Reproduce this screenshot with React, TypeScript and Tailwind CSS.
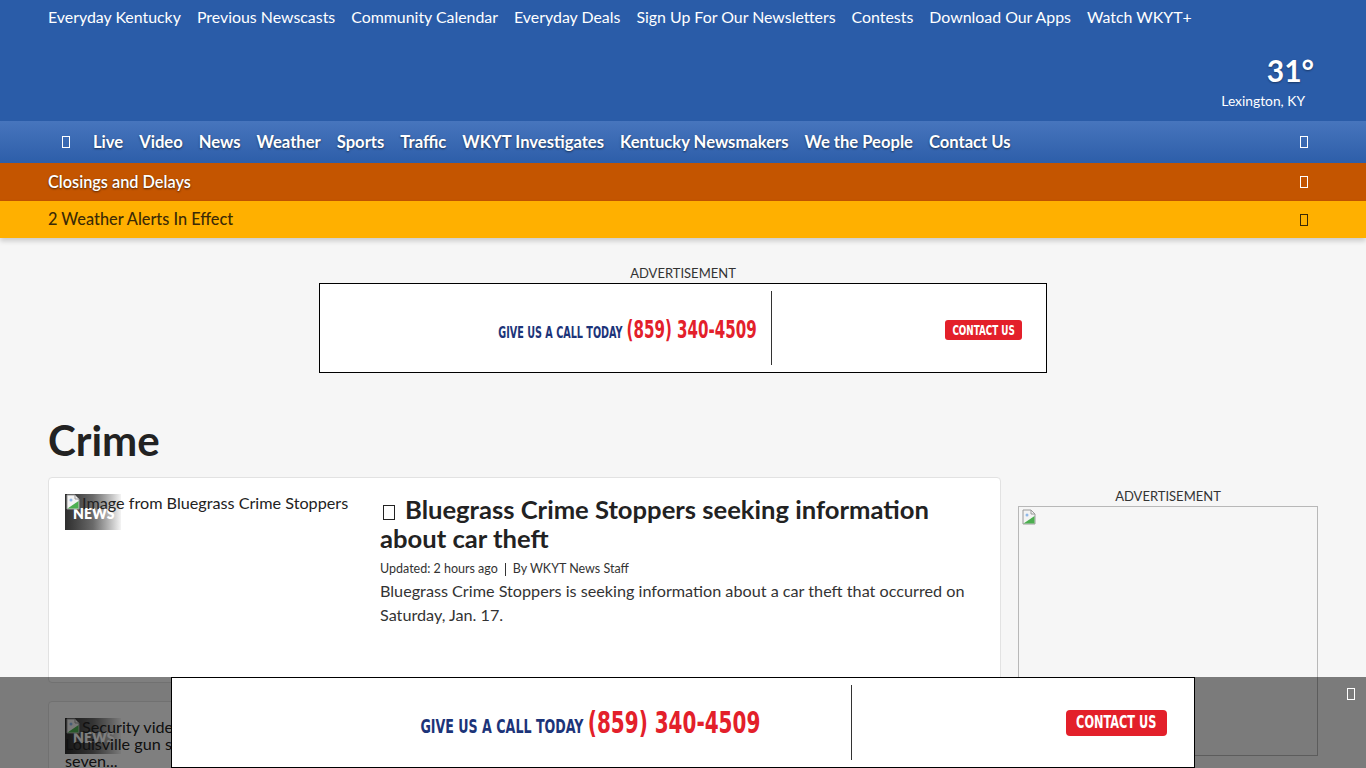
import React from "react";

const topLinks = [
    "Everyday Kentucky",
    "Previous Newscasts",
    "Community Calendar",
    "Everyday Deals",
    "Sign Up For Our Newsletters",
    "Contests",
    "Download Our Apps",
    "Watch WKYT+",
];

const navLinks = [
    "Live",
    "Video",
    "News",
    "Weather",
    "Sports",
    "Traffic",
    "WKYT Investigates",
    "Kentucky Newsmakers",
    "We the People",
    "Contact Us",
];

// missing-glyph box, the site's icon font never loaded
function Tofu({ className = "" }: { className?: string }) {
    return <span className={`inline-block w-[8px] h-[12px] border border-current ${className}`} />;
}

function BrokenImage({ className = "" }: { className?: string }) {
    return (
        <svg width="16" height="16" viewBox="0 0 16 16" className={`shrink-0 ${className}`}>
            <path d="M2 1h8l4 4v10H2z" fill="#f3f3f3" stroke="#9a9a9a" />
            <path d="M10 1v4h4" fill="none" stroke="#9a9a9a" />
            <path d="M2.5 14.5 L13.5 7 V14.5 Z" fill="#4caf50" />
            <circle cx="6" cy="6" r="1.5" fill="#8fb8e8" />
        </svg>
    );
}

function CallAd({ big }: { big?: boolean }) {
    return (
        <div className="flex h-full items-center font-['DejaVu_Sans_Condensed','DejaVu_Sans',sans-serif] font-bold">
            <div
                className={
                    big
                        ? "w-[679px] h-full flex items-center justify-end pr-[91px]"
                        : "w-[451px] h-full flex items-center justify-end pr-[14px] pt-[4px]"
                }
            >
                <span
                    className={
                        big
                            ? "inline-flex items-baseline gap-[6px] origin-right scale-x-[0.74] whitespace-nowrap"
                            : "inline-flex items-baseline gap-[6px] origin-right scale-x-[0.67] whitespace-nowrap"
                    }
                >
                    <span className={big ? "text-[19px] text-[#1c3479]" : "text-[16px] text-[#1c3479]"}>GIVE US A CALL TODAY</span>
                    <span className={big ? "text-[30px] text-[#e3202a]" : "text-[25px] text-[#e3202a]"}>(859) 340-4509</span>
                </span>
            </div>
            <div className={big ? "w-px h-[75px] bg-[#333]" : "w-px h-[74px] bg-[#333]"} />
            <div className={big ? "flex-1 flex justify-end pr-[27px]" : "flex-1 flex justify-end pr-[24px] pt-[4px]"}>
                <span
                    className={
                        big
                            ? "bg-[#e3202a] text-white rounded-[4px] w-[101px] h-[26px] flex items-center justify-center"
                            : "bg-[#e3202a] text-white rounded-[3px] w-[77px] h-[20px] flex items-center justify-center"
                    }
                >
                    <span className={big ? "text-[17px] scale-x-[0.74] whitespace-nowrap" : "text-[14px] scale-x-[0.7] whitespace-nowrap"}>
                        CONTACT US
                    </span>
                </span>
            </div>
        </div>
    );
}

function StoryCard({
    alt,
    title,
    meta,
    desc,
}: {
    alt: React.ReactNode;
    title?: string;
    meta?: string;
    desc?: string;
}) {
    return (
        <div className="bg-white border border-[#e2e2e2] rounded-[4px] p-[16px] flex gap-[15px] min-h-[206px]">
            <div className="relative w-[300px] shrink-0">
                <div className="absolute left-0 top-0 w-[56px] h-[36px] bg-gradient-to-r from-[#2e2e2e] via-[#6a6a6a] to-[#f4f4f4] flex items-end pb-[9px] pl-[8px]">
                    <span className="text-white font-extrabold text-[14px] leading-none">NEWS</span>
                </div>
                <div className="relative text-[16.2px] leading-[17px] text-[#222]">
                    <BrokenImage className="inline-block align-top mr-[1px]" />
                    {alt}
                </div>
            </div>
            {title && (
                <div className="flex-1 pt-[1px]">
                    <h2 className="text-[25.6px] leading-[29px] font-bold text-[#222]">
                        <Tofu className="w-[12px] h-[15px] align-[-1px] mr-[10px] ml-[3px] border-[#444]" />
                        {title}
                    </h2>
                    <div className="mt-[8px] text-[12.5px] leading-[16px] text-[#333] flex items-center">
                        <span>Updated: 2 hours ago</span>
                        <span className="mx-[7px] w-px h-[13px] bg-[#333]" />
                        <span>{meta}</span>
                    </div>
                    <p className="mt-[2px] text-[16.2px] leading-[24px] text-[#333]">{desc}</p>
                </div>
            )}
        </div>
    );
}

export default function App() {
    return (
        <main className="min-h-screen bg-[#f6f6f6] font-['Lato','Noto_Sans',sans-serif] overflow-hidden h-[768px] relative">
            {/* Header */}
            <div className="bg-[#2a5ca8] h-[121px] px-[48px] text-white">
                <div className="flex gap-[16px] h-[34px] items-center text-[15.9px]">
                    {topLinks.map((l) => (
                        <span key={l} className="whitespace-nowrap">{l}</span>
                    ))}
                </div>
                <div className="flex justify-end pr-[4px] pt-[18px]">
                    <div className="flex flex-col items-end">
                        <span className="text-[30px] leading-[36px] font-bold [text-shadow:0_1px_2px_rgba(0,0,0,0.4)]">31°</span>
                        <span className="text-[13.8px] leading-[16px] mt-[5px] mr-[9px]">Lexington, KY</span>
                    </div>
                </div>
            </div>

            {/* Main nav */}
            <div className="h-[42px] bg-gradient-to-b from-[#4775bd] to-[#2d5ea9] flex items-center pl-[62px] pr-[58px] text-white font-bold text-[16.6px] [text-shadow:0_1px_2px_rgba(0,0,0,0.55)]">
                <Tofu className="mr-[23px]" />
                <div className="flex gap-[16px]">
                    {navLinks.map((l) => (
                        <span key={l} className="whitespace-nowrap">{l}</span>
                    ))}
                </div>
                <Tofu className="ml-auto" />
            </div>

            {/* Alert bars */}
            <div className="h-[38px] bg-[#c45500] flex items-center px-[48px] pr-[58px] text-white text-[16.3px] font-semibold [text-shadow:0_1px_2px_rgba(0,0,0,0.6)]">
                <span>Closings and Delays</span>
                <Tofu className="ml-auto h-[11px] w-[7px]" />
            </div>
            <div className="h-[37px] bg-[#ffb000] flex items-center px-[48px] pr-[58px] text-[#3b2a06] text-[16.3px] font-medium shadow-[0_3px_5px_rgba(0,0,0,0.18)] relative">
                <span>2 Weather Alerts In Effect</span>
                <Tofu className="ml-auto h-[11px] w-[7px]" />
            </div>

            {/* Top ad */}
            <div className="flex flex-col items-center pt-[27px]">
                <span className="text-[13px] leading-[16px] text-[#333]">ADVERTISEMENT</span>
                <div className="mt-[2px] w-[728px] h-[90px] bg-white border border-black">
                    <CallAd />
                </div>
            </div>

            <div className="px-[48px]">
                <h1 className="mt-[42px] text-[42px] leading-[50px] font-bold text-[#222]">Crime</h1>

                <div className="mt-[12px] flex gap-[17px]">
                    <div className="w-[953px] flex flex-col gap-[18px]">
                        <StoryCard
                            alt="Image from Bluegrass Crime Stoppers"
                            title="Bluegrass Crime Stoppers seeking information about car theft"
                            meta="By WKYT News Staff"
                            desc="Bluegrass Crime Stoppers is seeking information about a car theft that occurred on Saturday, Jan. 17."
                        />
                        <StoryCard
                            alt={
                                <>
                                    Security video shows moments before
                                    <br />
                                    Louisville gun store shooting that left
                                    <br />
                                    seven...
                                </>
                            }
                            title="Security video shows Louisville gun store shooting"
                            meta="By WKYT News Staff"
                            desc="Police say seven people were hurt."
                        />
                    </div>
                    <aside className="w-[300px] flex flex-col items-center pt-[11px]">
                        <span className="text-[13px] leading-[16px] text-[#333]">ADVERTISEMENT</span>
                        <div className="mt-[2px] w-[300px] h-[250px] border border-[#b8b8b8] p-[2px]">
                            <BrokenImage />
                        </div>
                    </aside>
                </div>
            </div>

            {/* Sticky bottom ad */}
            <div className="fixed left-0 right-0 bottom-0 h-[91px] bg-black/50 flex justify-center">
                <div className="w-[1024px] h-[91px] bg-white border border-black">
                    <CallAd big />
                </div>
                <Tofu className="absolute right-[11px] top-[11px] text-white h-[11px] w-[7px]" />
            </div>
        </main>
    );
}
